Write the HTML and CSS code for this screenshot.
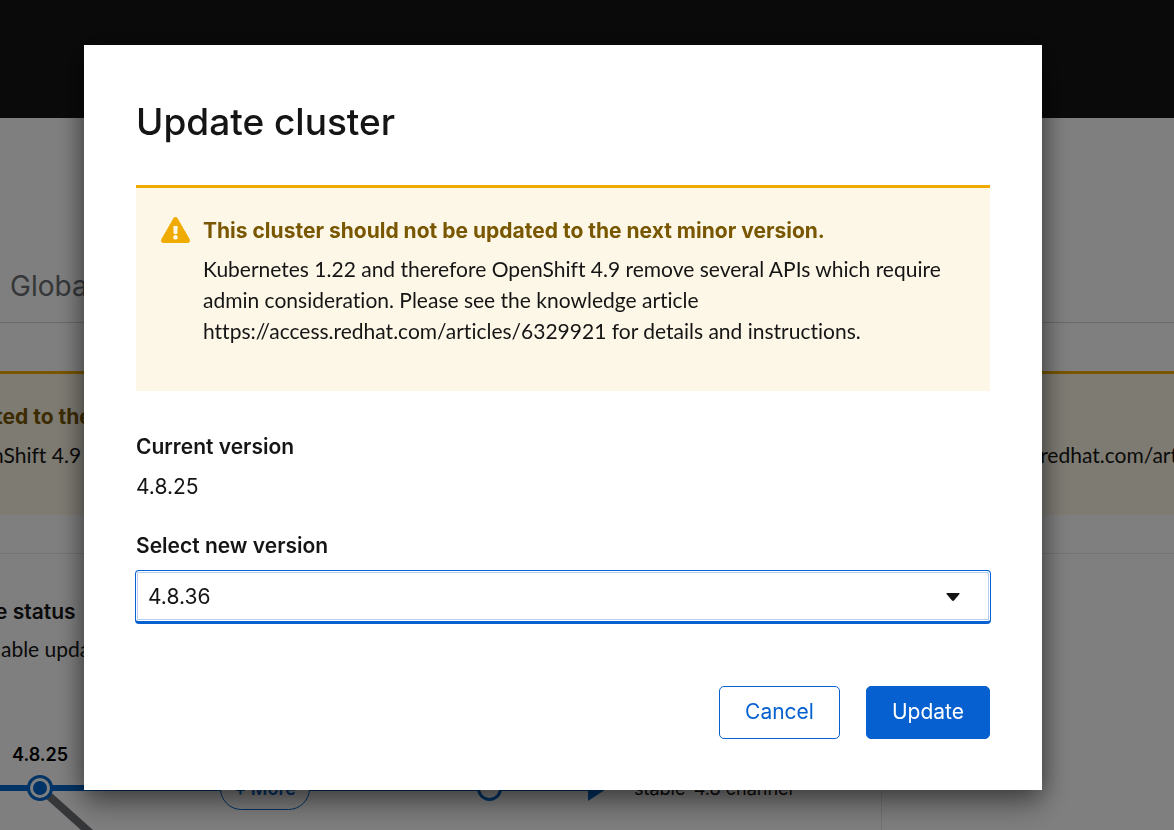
FILE: index.html
```html
<!DOCTYPE html>
<html lang="en">
<head>
<meta charset="utf-8">
<title>Update cluster</title>
<link rel="stylesheet" href="styles.css">
</head>
<body>
<div class="page">
  <header class="masthead"></header>
  <nav class="tabs"><a class="tab" href="#global">Global</a></nav>
  <section class="page-alert">
    <div class="page-alert-title">ted to the</div>
    <div class="page-alert-text"><span>nShift 4.9</span><span class="page-alert-link">redhat.com/art</span></div>
  </section>
  <main class="details">
    <div class="status">
      <div class="status-title">e status</div>
      <div class="status-text">lable upda</div>
    </div>
    <div class="graph">
      <svg class="graph-lines" width="882" height="150" viewBox="0 680 882 150" aria-hidden="true">
        <path d="M40 788L96 838" stroke="#6a6e73" stroke-width="8"/>
        <path d="M0 788H590" stroke="#0066cc" stroke-width="6"/>
        <path d="M588 776v25l19-12.500z" fill="#0066cc"/>
        <circle cx="40" cy="788" r="11.500" fill="#fff" stroke="#0066cc" stroke-width="3"/>
        <circle cx="40" cy="788" r="7" fill="#0066cc"/>
        <circle cx="489.500" cy="788.500" r="11" fill="#fff" stroke="#0066cc" stroke-width="3"/>
      </svg>
      <span class="node-label">4.8.25</span>
      <button class="more" type="button">+ More</button>
      <span class="channel">stable-4.8 channel</span>
    </div>
  </main>
</div>
<div class="backdrop">
  <form class="modal" role="dialog" aria-labelledby="modal-title">
    <h1 class="modal-title" id="modal-title">Update cluster</h1>
    <section class="alert">
      <svg class="alert-icon" viewBox="0 0 576 512" aria-hidden="true"><path fill="#f0ab00" d="M569.500 440C588 472 564.800 512 527.900 512H48.100c-36.900 0-60-40.100-41.600-72L246.400 24c18.500-32 64.700-32 83.200 0l239.900 416zM288 354c-25.400 0-46 20.600-46 46s20.600 46 46 46 46-20.600 46-46-20.600-46-46-46zm-43.700-165.300l7.400 136c.3 6.400 5.600 11.300 12 11.300h48.500c6.400 0 11.600-5 12-11.300l7.400-136c.4-6.900-5.100-12.700-12-12.700h-63.400c-6.900 0-12.400 5.800-12 12.700z"/></svg>
      <div class="alert-content">
        <h2 class="alert-title">This cluster should not be updated to the next minor version.</h2>
        <p class="alert-text">Kubernetes 1.22 and therefore OpenShift 4.9 remove several APIs which require<br>admin consideration. Please see the knowledge article<br>https://access.redhat.com/articles/6329921 for details and instructions.</p>
      </div>
    </section>
    <div class="field-label">Current version</div>
    <div class="current">4.8.25</div>
    <label class="field-label" for="version">Select new version</label>
    <div class="select-wrap">
      <select class="select" id="version"><option>4.8.36</option></select>
      <svg class="caret" width="14" height="8" viewBox="0 0 14 8" aria-hidden="true"><path d="M1 0h12q1 0 .5 1L8 7.500q-1 .8-2 0L.5 1Q0 0 1 0z" fill="#151515"/></svg>
    </div>
    <div class="actions">
      <button class="button secondary" type="button">Cancel</button>
      <button class="button primary" type="submit">Update</button>
    </div>
  </form>
</div>
</body>
</html>
```
FILE: styles.css
```css
* { box-sizing: border-box; }
body {
  margin: 0;
  height: 100vh;
  overflow: hidden;
  background: #fff;
  color: #151515;
  font: 21px/31px "Lato", "Liberation Sans", sans-serif;
  font-variant-ligatures: none;
}
button, select { font: inherit; color: inherit; }
.page { height: 100vh; overflow: hidden; }
.masthead { height: 118px; background: #151515; }
.tabs { height: 205px; padding: 148px 10px 0; border-bottom: 1px solid #d2d2d2; }
.tab { color: #6a6e73; font-family: "Inter", sans-serif; font-size: 28px; line-height: 40px; text-decoration: none; }
.page-alert {
  height: 144px;
  margin-top: 48px;
  padding-top: 25px;
  border-top: 3px solid #f0ab00;
  background: #fdf7e7;
  white-space: nowrap;
  overflow: hidden;
}
.page-alert-title { margin-left: -5px; color: #795600; font-family: "Inter", sans-serif; font-weight: 700; line-height: 36px; margin-bottom: 4px; }
.page-alert-text { display: flex; justify-content: space-between; margin: 0 -4px 0 -8px; }
.details { margin-top: 38px; border-top: 1px solid #e6e6e6; }
.status { padding-top: 42px; white-space: nowrap; }
.status-title { margin-left: -5px; font-family: "Inter", sans-serif; font-weight: 600; line-height: 32px; }
.status-text { margin: 5px 0 0 -4px; }
.graph { position: relative; height: 170px; margin-top: 16px; width: 882px; border-right: 1px solid #e6e6e6; }
.graph-lines { position: absolute; left: 0; top: 0; }
.node-label { position: absolute; left: 12px; top: 61px; font-family: "Inter", sans-serif; font-size: 18px; font-weight: 600; line-height: 28px; color: #000; }
.more { position: absolute; left: 220px; top: 87px; width: 90px; height: 43px; padding: 0; border: 1px solid #0066cc; border-radius: 22px; background: #fff; color: #0066cc; font-family: "Inter", sans-serif; font-size: 18px; font-weight: 600; }
.channel { position: absolute; left: 634px; top: 93px; font-family: "Inter", sans-serif; font-size: 18px; white-space: nowrap; }
.backdrop { position: fixed; inset: 0; padding: 45px 132px 40px 84px; background: rgba(0, 0, 0, .5); }
.modal {
  min-height: 100%;
  padding: 52px 52px 51px;
  background: #fff;
  box-shadow: 0 14px 28px rgba(0, 0, 0, .4), 0 0 22px rgba(0, 0, 0, .3);
}
.modal-title { margin: 0; font-family: "Inter", sans-serif; font-size: 37px; font-weight: 500; line-height: 50px; }
.alert {
  display: flex;
  gap: 13px;
  margin-top: 38px;
  padding: 24px 25px 45px;
  border-top: 3px solid #f0ab00;
  background: #fdf7e7;
}
.alert-icon { flex: none; width: 29px; height: 26px; margin-top: 5px; }
.alert-title { margin: 0 0 4px; color: #795600; font-family: "Inter", sans-serif; font-size: 21px; font-weight: 700; line-height: 37px; }
.alert-text { margin: 0; }
.field-label { display: block; font-family: "Inter", sans-serif; font-size: 21px; font-weight: 600; line-height: 32px; }
.alert + .field-label { margin-top: 40px; }
.current { margin: 8px 0 27px; font-family: "Inter", sans-serif; font-size: 21px; line-height: 32px; }
.select-wrap { position: relative; margin: 8px -1px 0; }
.select {
  display: block;
  width: 100%;
  height: 54px;
  padding: 0 12px;
  appearance: none;
  border: 1px solid #0660cf;
  border-bottom-width: 3px;
  border-radius: 4px;
  background: #fff;
  box-shadow: inset 0 0 0 1px #fff, inset 0 0 0 2px #b4cff1;
  outline: none;
  font-family: "Inter", sans-serif;
}
.caret { position: absolute; right: 31px; top: 23px; pointer-events: none; }
.actions { display: flex; justify-content: flex-end; gap: 26px; margin-top: 62px; }
.button { height: 53px; padding: 0 25px 2px; border: 1px solid #0660cf; border-radius: 5px; font-family: "Inter", sans-serif; font-size: 21px; line-height: 30px; }
.secondary { background: #fff; color: #0660cf; }
.primary { background: #0660cf; color: #fff; }
```
